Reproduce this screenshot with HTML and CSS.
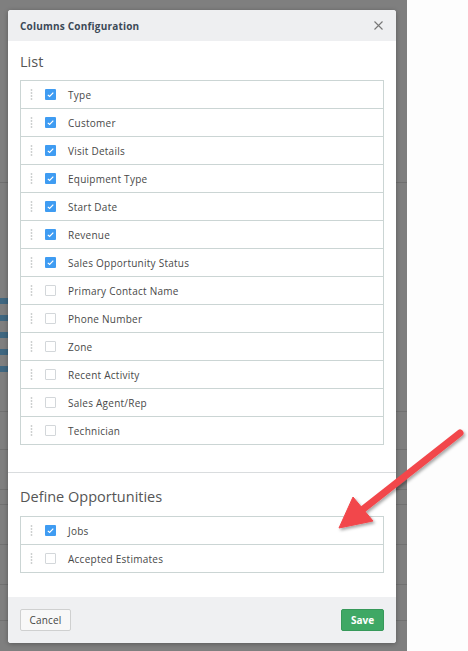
FILE: index.html
```html
<!DOCTYPE html>
<html lang="en">
<head>
  <meta charset="UTF-8">
  <title>Columns Configuration</title>
  <link rel="stylesheet" href="styles.css">
</head>
<body>
  <div class="screen">
    <div class="page">
      <div class="page-head"></div>
      <div class="page-block">
        <div class="tags"><span></span><span></span><span></span><span></span><span></span></div>
      </div>
      <div class="page-row tall"></div>
      <div class="page-row"></div>
      <div class="page-row thin"></div>
      <div class="page-row"></div>
      <div class="page-row"></div>
      <div class="page-row last"></div>
    </div>

    <div class="modal">
      <div class="modal-header">
        <span class="modal-title">Columns Configuration</span>
        <svg class="close" width="9" height="9" viewBox="0 0 9 9"><path d="M0.5 0.5L8.5 8.5M8.5 0.5L0.5 8.5" stroke="#777" stroke-width="1.1"/></svg>
      </div>

      <div class="section">
        <h2>List</h2>
        <div class="col-table" id="listTable"></div>
      </div>

      <div class="section second">
        <h2>Define Opportunities</h2>
        <div class="col-table" id="oppTable"></div>
      </div>

      <div class="modal-footer">
        <button class="btn cancel">Cancel</button>
        <button class="btn save">Save</button>
      </div>
    </div>
  </div>

  <svg class="arrow" width="468" height="651" viewBox="0 0 468 651">
    <defs>
      <filter id="shadow" x="-20%" y="-20%" width="140%" height="140%">
        <feDropShadow dx="1.5" dy="2" stdDeviation="1.5" flood-color="#000" flood-opacity="0.35"/>
      </filter>
    </defs>
    <g filter="url(#shadow)" fill="#f2474b" stroke="#f2474b">
      <path d="M460 433L362 510" stroke-width="7" stroke-linecap="round" fill="none"/>
      <polygon points="339,528 353,497 373,521" stroke-width="1" stroke-linejoin="round"/>
    </g>
  </svg>

  <script>
    const listCols = [
      ['Type', true], ['Customer', true], ['Visit Details', true], ['Equipment Type', true],
      ['Start Date', true], ['Revenue', true], ['Sales Opportunity Status', true],
      ['Primary Contact Name', false], ['Phone Number', false], ['Zone', false],
      ['Recent Activity', false], ['Sales Agent/Rep', false], ['Technician', false]
    ];
    const oppCols = [['Jobs', true], ['Accepted Estimates', false]];

    const handle = '<svg class="handle" width="3" height="11" viewBox="0 0 3 11">' +
      '<circle cx="1.5" cy="1" r="0.9"/><circle cx="1.5" cy="4" r="0.9"/>' +
      '<circle cx="1.5" cy="7" r="0.9"/><circle cx="1.5" cy="10" r="0.9"/></svg>';
    const tick = '<svg width="11" height="11" viewBox="0 0 11 11"><path d="M2.8 5.9L4.6 7.5L8.3 3.6" stroke="#fff" stroke-width="1.2" fill="none"/></svg>';

    function fill(id, cols) {
      const el = document.getElementById(id);
      cols.forEach(([name, on]) => {
        el.innerHTML += `
          <div class="col-row">
            ${handle}
            <span class="check ${on ? 'on' : ''}">${on ? tick : ''}</span>
            <span class="col-name">${name}</span>
          </div>`;
      });
    }
    fill('listTable', listCols);
    fill('oppTable', oppCols);
  </script>
</body>
</html>
```

FILE: styles.css
```css
body {
  margin: 0;
  display: flex;
  position: relative;
  background-color: #fdfdfd;
  font-family: 'Open Sans', 'Liberation Sans', sans-serif;
  height: 651px;
  overflow: hidden;
}

.screen {
  position: relative;
  width: 407px;
  height: 651px;
  background-color: #7f7f7f;
  overflow: hidden;
}

/* dimmed page underneath the dialog */
.page-head {
  height: 182px;
  border-bottom: 1px solid #6f6f6f;
}

.page-block {
  height: 228px;
  border-bottom: 1px solid #717171;
}

.tags {
  padding-top: 115px;
  display: flex;
  flex-direction: column;
  gap: 11px;
}

.tags span {
  display: block;
  width: 8px;
  height: 6px;
  background-color: #3f6781;
}

.page-row {
  height: 39px;
  border-bottom: 1px solid #717171;
}

.page-row.tall {
  height: 37px;
}

.page-row.thin {
  height: 14px;
}

.page-row.last {
  height: 35px;
}

/* dialog */
.modal {
  position: absolute;
  left: 8px;
  top: 10px;
  width: 388px;
  background-color: #fff;
  border-radius: 3px;
  box-shadow: 0 1px 5px rgba(0,0,0,0.3);
  overflow: hidden;
}

.modal-header {
  height: 31px;
  padding: 0 13px 0 12px;
  background-color: #eeeff1;
  display: flex;
  align-items: center;
  justify-content: space-between;
}

.modal-title {
  font-size: 10px;
  font-weight: 700;
  letter-spacing: 0.2px;
  color: #3c4957;
}

.section {
  padding: 11px 12px 27px;
  border-bottom: 1px solid #d9dcde;
}

.section.second {
  padding: 14px 12px 24px;
  border-bottom: none;
}

h2 {
  margin: 0 0 8px;
  font-size: 14.5px;
  line-height: 20px;
  font-weight: 400;
  color: #555;
}

.second h2 {
  margin-bottom: 9px;
}

.col-table {
  border: 1px solid #cbd5d4;
}

.col-row {
  height: 27px;
  padding-left: 9px;
  display: flex;
  align-items: center;
}

.col-row + .col-row {
  border-top: 1px solid #cbd5d4;
}

.handle {
  fill: #c9cccc;
}

.check {
  box-sizing: border-box;
  width: 11px;
  height: 11px;
  margin-left: 12px;
  border: 1px solid #d3d7da;
  border-radius: 1px;
  background-color: #fff;
  display: flex;
}

.check.on {
  border: none;
  background-color: #3f9cf2;
}

.col-name {
  margin-left: 12px;
  font-size: 10px;
  letter-spacing: 0.25px;
  color: #484848;
}

.modal-footer {
  height: 46px;
  padding: 0 12px;
  background-color: #eff0f2;
  display: flex;
  align-items: center;
  justify-content: space-between;
}

.btn {
  height: 22px;
  border-radius: 2px;
  font-family: 'Open Sans', 'Liberation Sans', sans-serif;
  font-size: 10px;
  padding: 0;
}

.cancel {
  width: 51px;
  background-color: #f8f8f8;
  border: 1px solid #cfd0d0;
  color: #454545;
  letter-spacing: 0.2px;
}

.save {
  width: 43px;
  background-color: #3fa865;
  border: 1px solid #37995a;
  color: #fff;
  font-weight: 700;
}

.arrow {
  position: absolute;
  left: 0;
  top: 0;
  pointer-events: none;
}
```
